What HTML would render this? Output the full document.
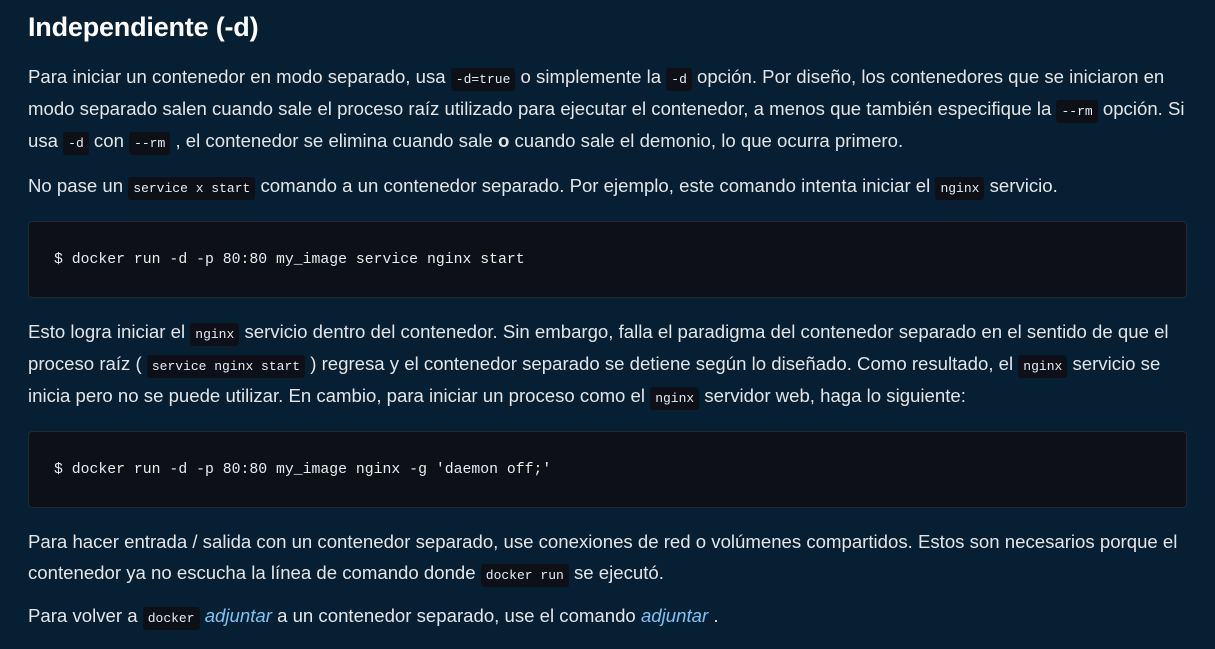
<!DOCTYPE html>
<html><head><meta charset="utf-8"><style>
html,body{margin:0;padding:0;background:#061f32;width:1215px;height:649px;overflow:hidden}
body{font-family:"Liberation Sans","DejaVu Sans",sans-serif;color:#e3e6e8;font-size:18.6px;letter-spacing:0}
h1{position:absolute;left:28px;top:12px;margin:0;font-size:27px;font-weight:bold;color:#fff;letter-spacing:-0.2px}
.l{position:absolute;left:28px;white-space:nowrap;line-height:24px}
code{font-family:"Liberation Mono","DejaVu Sans Mono",monospace;font-size:13px;background:#0d1117;color:#e6edf3;padding:4px 5px;border-radius:3px;letter-spacing:0}
.pre{position:absolute;left:28px;width:1159px;height:77px;background:#0d1117;border:1px solid #1e2a36;border-radius:4px;font-family:"Liberation Mono","DejaVu Sans Mono",monospace;font-size:14.8px;color:#e6edf3;letter-spacing:0;box-sizing:border-box;padding-left:25px;line-height:77px}
a{color:#7cc4f5;font-style:italic;text-decoration:none}
</style></head><body>
<h1>Independiente (-d)</h1>
<div class="l" style="top:65px">Para iniciar un contenedor en modo separado, usa <code>-d=true</code> o simplemente la <code>-d</code> opción. Por diseño, los contenedores que se iniciaron en</div>
<div class="l" style="top:97px">modo separado salen cuando sale el proceso raíz utilizado para ejecutar el contenedor, a menos que también especifique la <code>--rm</code> opción. Si</div>
<div class="l" style="top:129px">usa <code>-d</code> con <code>--rm</code> , el contenedor se elimina cuando sale <b>o</b> cuando sale el demonio, lo que ocurra primero.</div>
<div class="l" style="top:174px">No pase un <code>service x start</code> comando a un contenedor separado. Por ejemplo, este comando intenta iniciar el <code>nginx</code> servicio.</div>
<div class="pre" style="top:221px">$ docker run -d -p 80:80 my_image service nginx start</div>
<div class="l" style="top:320px">Esto logra iniciar el <code>nginx</code> servicio dentro del contenedor. Sin embargo, falla el paradigma del contenedor separado en el sentido de que el</div>
<div class="l" style="top:352px">proceso raíz ( <code>service nginx start</code> ) regresa y el contenedor separado se detiene según lo diseñado. Como resultado, el <code>nginx</code> servicio se</div>
<div class="l" style="top:384px">inicia pero no se puede utilizar. En cambio, para iniciar un proceso como el <code>nginx</code> servidor web, haga lo siguiente:</div>
<div class="pre" style="top:431px">$ docker run -d -p 80:80 my_image nginx -g 'daemon off;'</div>
<div class="l" style="top:530px">Para hacer entrada / salida con un contenedor separado, use conexiones de red o volúmenes compartidos. Estos son necesarios porque el</div>
<div class="l" style="top:561px">contenedor ya no escucha la línea de comando donde <code>docker run</code> se ejecutó.</div>
<div class="l" style="top:604px">Para volver a <code>docker</code> <a>adjuntar</a> a un contenedor separado, use el comando <a>adjuntar</a> .</div>
</body></html>
